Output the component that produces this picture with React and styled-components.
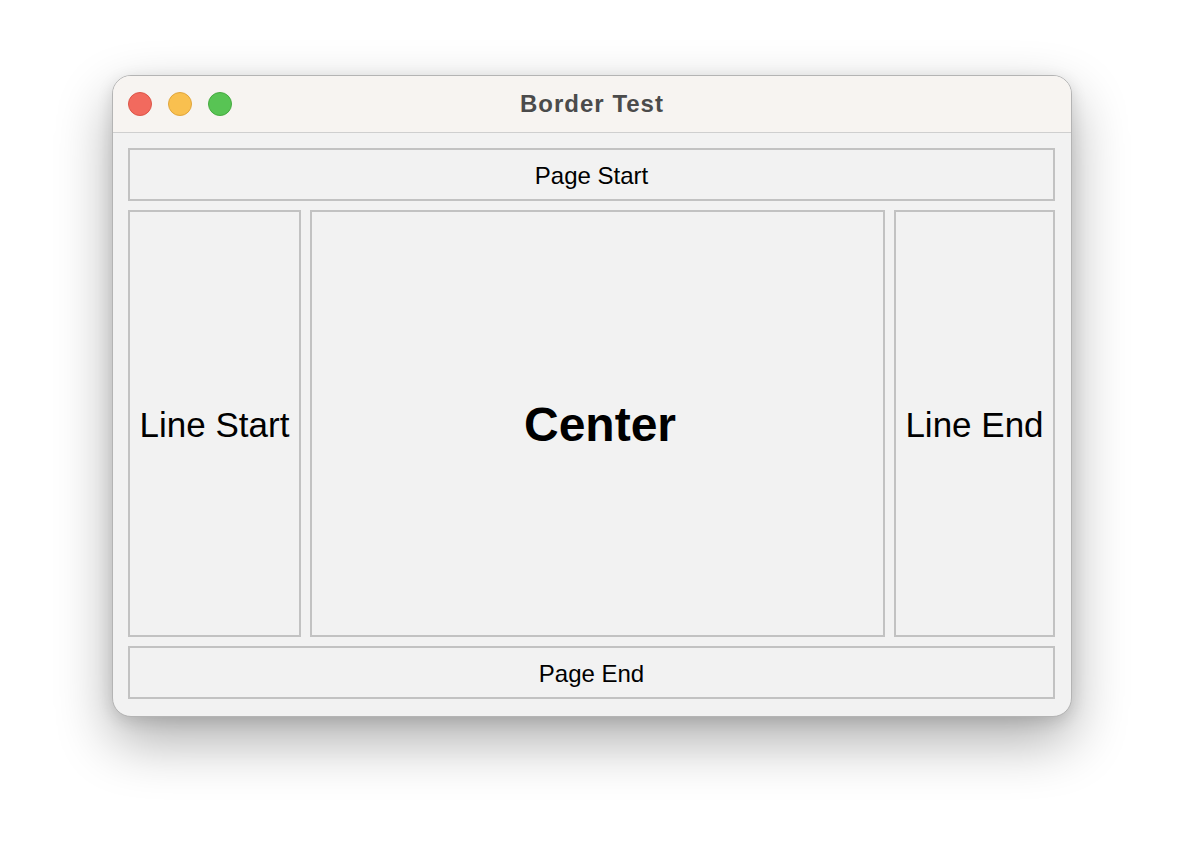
import React from 'react';
import styled, { createGlobalStyle } from 'styled-components';

/***************************************
  GLOBAL
***************************************/

const Global = createGlobalStyle`
  * { box-sizing: border-box; }
  body {
    margin: 0;
    background: #ffffff;
    font-family: "Liberation Sans", Arial, sans-serif;
  }
`;

/***************************************
  COMPONENTS
***************************************/

const Page = styled.div`
  width: 1184px;
  height: 864px;
  padding: 75px 0 0 112px;
`;

const Window = styled.div`
  width: 960px;
  height: 642px;
  border: 1px solid #b4b4b4;
  border-radius: 19px;
  background: #f2f2f2;
  overflow: hidden;
  display: flex;
  flex-direction: column;
  box-shadow: 0 24px 56px rgba(0, 0, 0, 0.32), 0 4px 16px rgba(0, 0, 0, 0.12);
`;

const TitleBar = styled.div`
  position: relative;
  height: 57px;
  flex: 0 0 auto;
  display: flex;
  align-items: center;
  justify-content: center;
  background: #f7f4f1;
  border-bottom: 1px solid #cfcfcf;
`;

const Lights = styled.div`
  position: absolute;
  left: 15px;
  top: 16px;
  display: flex;
  gap: 16px;
`;

const Light = styled.span`
  width: 24px;
  height: 24px;
  border-radius: 50%;
  background: ${(p) => p.fill};
  border: 1px solid ${(p) => p.edge};
`;

const Title = styled.div`
  font-size: 24px;
  font-weight: bold;
  letter-spacing: 1px;
  color: #4b4b4b;
`;

const Content = styled.div`
  flex: 1 1 auto;
  padding: 15px 15px 16px;
  display: grid;
  grid-template-columns: 173px 575px 161px;
  grid-template-rows: 53px 427px 53px;
  gap: 9px;
`;

const Region = styled.div`
  grid-column: ${(p) => p.span || 'auto'};
  border: 2px solid #c2c2c2;
  background: #f2f2f2;
  display: flex;
  align-items: center;
  justify-content: center;
  padding-top: 2px;
  padding-left: ${(p) => (p.bold ? 5 : 0)}px;
  color: #000;
  font-size: ${(p) => p.size}px;
  font-weight: ${(p) => (p.bold ? 'bold' : 'normal')};
  white-space: nowrap;
`;

/***************************************
  MAIN
***************************************/

const App = () => (
  <Page>
    <Global />
    <Window>
      <TitleBar>
        <Lights>
          <Light fill='#f26a5e' edge='#dc5548' />
          <Light fill='#f9c04f' edge='#e0a53c' />
          <Light fill='#58c454' edge='#46aa40' />
        </Lights>
        <Title>Border Test</Title>
      </TitleBar>
      <Content>
        <Region span='1 / 4' size={24}>Page Start</Region>
        <Region size={35}>Line Start</Region>
        <Region size={48} bold>Center</Region>
        <Region size={35}>Line End</Region>
        <Region span='1 / 4' size={24}>Page End</Region>
      </Content>
    </Window>
  </Page>
);

/**************************************/

export default App;
